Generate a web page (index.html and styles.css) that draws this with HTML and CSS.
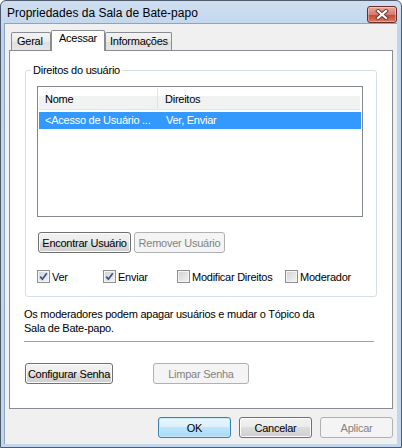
FILE: index.html
```html
<!DOCTYPE html>
<html>
<head>
    <title>Propriedades da Sala de Bate-papo</title>
    <link rel="stylesheet" href="styles.css">
</head>
<body>
    <div class="window">
        <div class="titlebar">
            <span class="title">Propriedades da Sala de Bate-papo</span>
            <button class="close" title="Fechar">
                <svg width="14" height="11" viewBox="0 0 14 11">
                    <path d="M3 2 L11 9 M11 2 L3 9" stroke="#5a3a35" stroke-width="4" stroke-linecap="square"/>
                    <path d="M3 2 L11 9 M11 2 L3 9" stroke="#ffffff" stroke-width="2.2" stroke-linecap="square"/>
                </svg>
            </button>
        </div>

        <div class="client">
            <div class="tabs">
                <div class="tab tab-geral">Geral</div>
                <div class="tab tab-active">Acessar</div>
                <div class="tab tab-info">Informações</div>
            </div>

            <div class="panel">
                <fieldset class="group">
                    <legend>Direitos do usuário</legend>

                    <div class="list">
                        <div class="list-header">
                            <div class="col col-name">Nome</div>
                            <div class="col col-rights">Direitos</div>
                        </div>
                        <div class="list-row selected">
                            <div class="col col-name">&lt;Acesso de Usuário ...</div>
                            <div class="col col-rights">Ver, Enviar</div>
                        </div>
                    </div>

                    <div class="user-buttons">
                        <button class="btn btn-find">Encontrar Usuário</button>
                        <button class="btn btn-remove" disabled>Remover Usuário</button>
                    </div>

                    <div class="checks">
                        <label class="check"><span class="box checked"><svg width="11" height="11" viewBox="0 0 11 11"><path d="M2.2 5.6 L4.4 8.2 L8.8 2.2" fill="none" stroke="#3a4f8c" stroke-width="1.7"/></svg></span>Ver</label>
                        <label class="check"><span class="box checked"><svg width="11" height="11" viewBox="0 0 11 11"><path d="M2.2 5.6 L4.4 8.2 L8.8 2.2" fill="none" stroke="#3a4f8c" stroke-width="1.7"/></svg></span>Enviar</label>
                        <label class="check"><span class="box"></span>Modificar Direitos</label>
                        <label class="check"><span class="box"></span>Moderador</label>
                    </div>
                </fieldset>

                <p class="note">Os moderadores podem apagar usuários e mudar o Tópico da<br>Sala de Bate-papo.</p>
                <div class="separator"></div>

                <div class="password-buttons">
                    <button class="btn btn-setpw">Configurar Senha</button>
                    <button class="btn btn-clearpw" disabled>Limpar Senha</button>
                </div>
            </div>

            <div class="footer">
                <button class="btn btn-dialog btn-default">OK</button>
                <button class="btn btn-dialog">Cancelar</button>
                <button class="btn btn-dialog" disabled>Aplicar</button>
            </div>
        </div>
    </div>
</body>
</html>
```

FILE: styles.css
```css
* {
    box-sizing: border-box;
}

body {
    margin: 0;
    font-family: "Liberation Sans", Arial, sans-serif;
    font-size: 11px;
    letter-spacing: -0.25px;
    color: #000;
    background: #fff;
}

.window {
    width: 402px;
    height: 448px;
    border: 1px solid #4d5b6c;
    border-radius: 6px 6px 0 0;
    background: linear-gradient(to bottom, #cfdff1, #bfd4ec 30px, #c3d6ec);
    display: flex;
    flex-direction: column;
}

.titlebar {
    height: 22px;
    display: flex;
    align-items: center;
    justify-content: space-between;
    padding: 0 4px 0 6px;
}

.title {
    font-size: 12px;
    letter-spacing: 0;
    color: #000;
    margin-top: 2px;
}

.close {
    width: 30px;
    height: 17px;
    margin-top: 4px;
    padding: 0;
    border: 1px solid #6b2d27;
    border-radius: 3px;
    background: linear-gradient(to bottom, #e9a99c, #d9786a 50%, #c5462f 51%, #d77a63);
    box-shadow: inset 0 0 0 1px rgba(255, 255, 255, 0.35);
    display: flex;
    align-items: center;
    justify-content: center;
}

.client {
    flex: 1;
    margin: 0 4px 3px 3px;
    border-left: 1px solid #8ea3bd;
    border-top: 1px solid #8ea3bd;
    background: #f0f0f0;
    padding: 7px 4px 0 4px;
    display: flex;
    flex-direction: column;
}

.tabs {
    display: flex;
    align-items: flex-end;
    padding-left: 2px;
    height: 20px;
    margin-bottom: -1px;
    position: relative;
    z-index: 1;
}

.tab {
    height: 18px;
    border: 1px solid #898c95;
    border-bottom: none;
    background: linear-gradient(to bottom, #f3f3f3, #ebebeb 50%, #dedede 51%, #e6e6e6);
    padding: 2px 0 0 5px;
    border-radius: 2px 2px 0 0;
    margin-bottom: 1px;
    white-space: nowrap;
}

.tab-geral {
    width: 40px;
}

.tab-active {
    width: 54px;
    height: 21px;
    margin-bottom: 0;
    background: #fff;
    padding: 1px 0 0 7px;
}

.tab-info {
    width: 67px;
    padding-left: 4px;
}

.panel {
    height: 359px;
    border: 1px solid #898c95;
    background: #fff;
    padding: 13px 15px 0 14px;
}

.group {
    margin: 0 0 0 1px;
    border: 1px solid #d5dfe5;
    border-radius: 3px;
    padding: 9px 13px 13px 11px;
    min-width: 0;
}

.group legend {
    padding: 0 2px;
    margin-left: -6px;
    line-height: 13px;
}

.list {
    height: 131px;
    border: 1px solid #828790;
    padding: 1px;
}

.list-header {
    height: 22px;
    display: flex;
    background: linear-gradient(to bottom, #fff 0, #fff 8px, #f1f2f2 8px);
    border-bottom: 1px solid #e3e4e6;
    margin-right: 1px;
}

.list-header .col {
    line-height: 23px;
}

.col-name {
    width: 119px;
    padding-left: 6px;
    white-space: nowrap;
    overflow: hidden;
}

.list-header .col-name {
    border-right: 1px solid #e3e4e6;
}

.col-rights {
    padding-left: 7px;
}

.list-row {
    height: 17px;
    margin-top: 2px;
    display: flex;
    line-height: 16px;
}

.list-row .col-name {
    width: 120px;
}

.list-row.selected {
    background: #3399ff;
    color: #fff;
}

.user-buttons {
    display: flex;
    gap: 3px;
    margin-top: 15px;
    padding-left: 1px;
}

.btn {
    height: 21px;
    font-family: "Liberation Sans", Arial, sans-serif;
    font-size: 11px;
    letter-spacing: -0.25px;
    white-space: nowrap;
    color: #000;
    border: 1px solid #707070;
    border-radius: 3px;
    background: linear-gradient(to bottom, #f2f2f2, #ebebeb 50%, #dddddd 50%, #cfcfcf);
    box-shadow: inset 0 0 0 1px #fcfcfc;
    padding: 0;
}

.btn:disabled {
    color: #838383;
    border-color: #adb2b5;
    background: #f4f4f4;
    box-shadow: none;
}

.btn-find {
    width: 93px;
}

.btn-remove {
    width: 91px;
}

.checks {
    display: grid;
    grid-template-columns: 66px 74px 108px auto;
    margin-top: 17px;
}

.check {
    display: flex;
    align-items: center;
    gap: 2px;
    height: 13px;
    white-space: nowrap;
}

.box {
    width: 13px;
    height: 13px;
    border: 1px solid #8e8f8f;
    background: linear-gradient(135deg, #cfd1d4, #f4f4f5);
    box-shadow: inset 0 0 0 1px #f4f4f4;
    display: flex;
    align-items: center;
    justify-content: center;
}

.note {
    margin: 10px 0 0 0;
    line-height: 14px;
}

.separator {
    height: 2px;
    margin: 6px 3px 0 0;
    border-top: 1px solid #a0a0a0;
    border-bottom: 1px solid #fff;
}

.password-buttons {
    display: flex;
    gap: 40px;
    margin-top: 20px;
    padding-left: 1px;
}

.btn-setpw {
    width: 88px;
}

.btn-clearpw {
    width: 96px;
}

.footer {
    display: flex;
    justify-content: flex-end;
    gap: 8px;
    padding-top: 8px;
}

.btn-dialog {
    width: 73px;
}

.btn-default {
    border-color: #3c7fb1;
    background: linear-gradient(to bottom, #eaf6fd, #d9f0fc 50%, #bee6fd 50%, #a7d9f5);
    box-shadow: inset 0 0 0 1px #c6e9fc;
}
```
